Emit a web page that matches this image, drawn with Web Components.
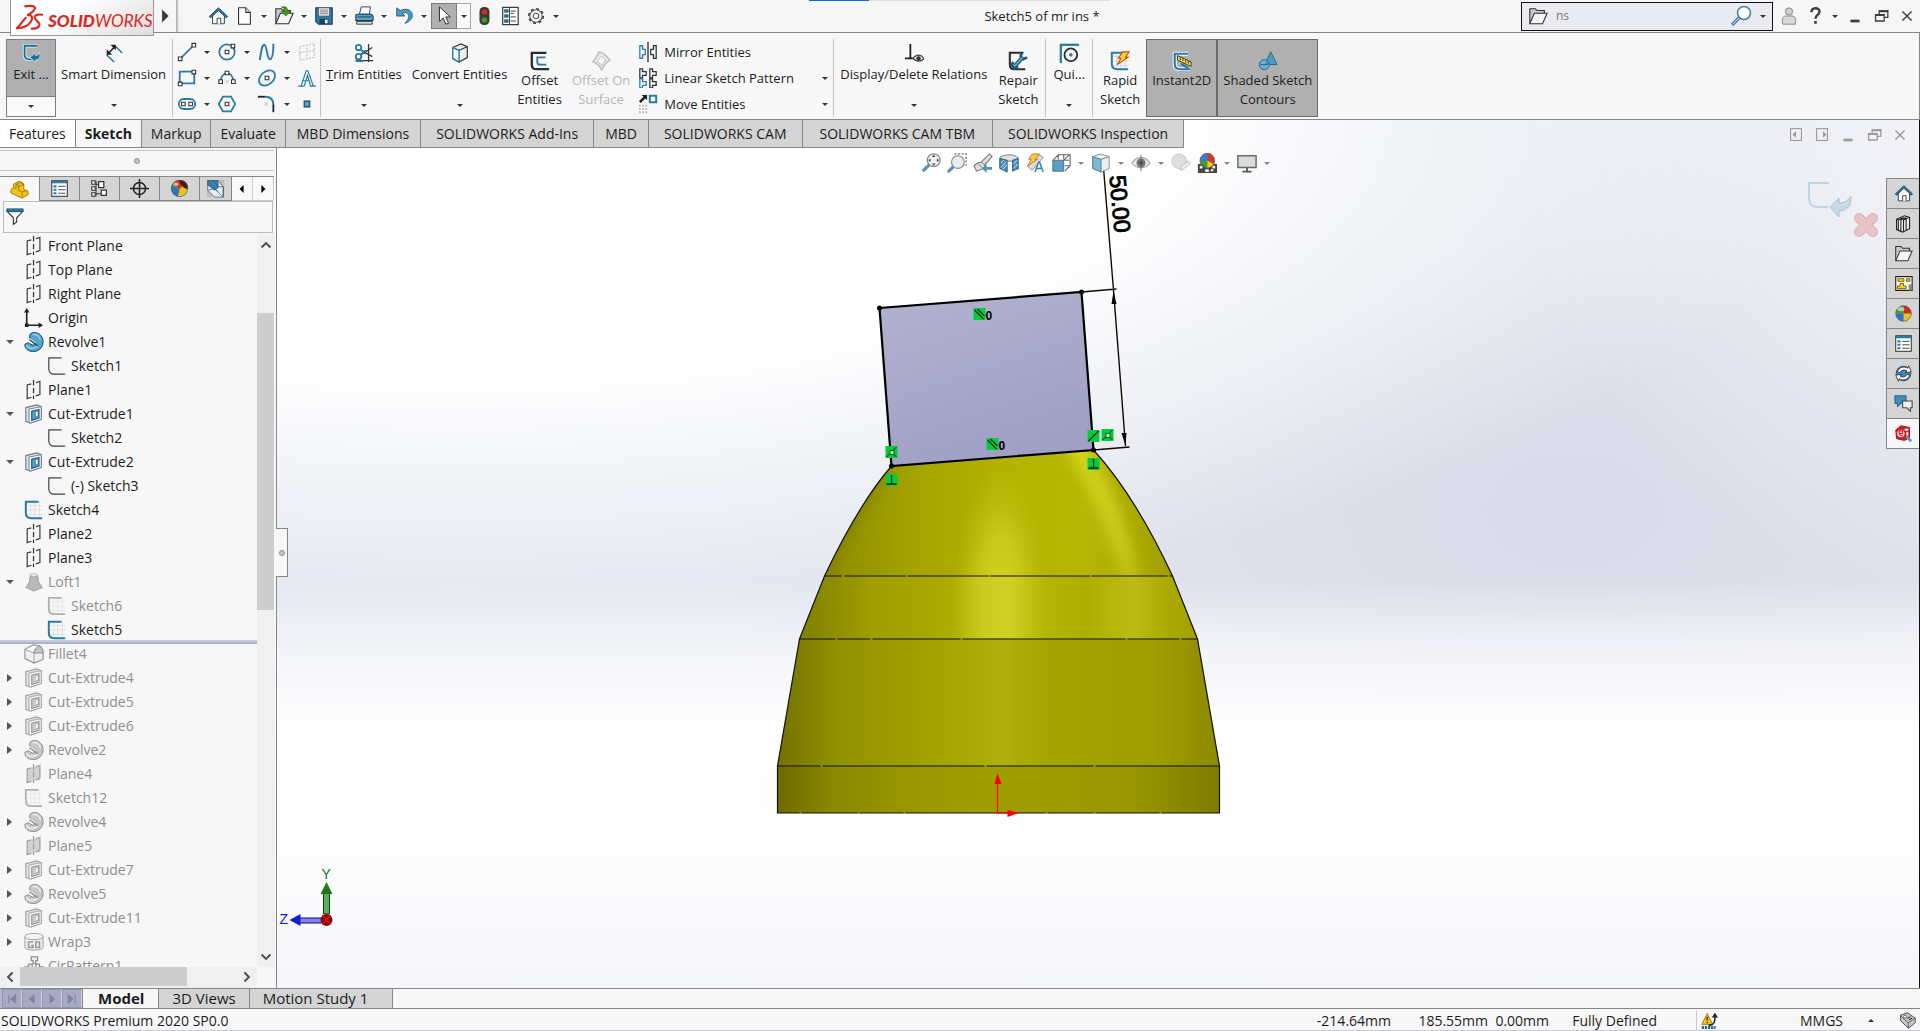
<!DOCTYPE html>
<html lang="en">
<head>
<meta charset="utf-8">
<title>Sketch5 of mr ins *</title>
<style>
html,body{height:100%;margin:0}
body{font-family:"Open Sans","Noto Sans",sans-serif;font-size:14px;color:#1c1c1c;background:#f7f7f7;overflow:hidden;
--panel:#f7f7f7;--line:#868686;--tab:#d4d4d4;--on:#b0b0b0;--small:13px}
</style>
</head>
<body>
<sw-app></sw-app>
<script>
const B='#2b7ba3', D='#333', G='#9a9a9a';
const planeIcon=(c,f='none')=>`<path d="M3.500 5.500L17.500 1.500V16L3.500 20.500z" fill="${f}"/><path d="M8 4.300L3.500 5.500V20.500L8 19M13 3L17.500 1.500V16L13 17.500" fill="none" stroke="${c}" stroke-width="1.300"/><path d="M10.500 0v21" stroke="${c}" stroke-width="1.400" stroke-dasharray="6 2.500" fill="none"/>`;
const cutIcon=(c,a,b)=>`<path d="M2 4L14 1l5 2v14L7 21l-5-2z" fill="#e2e2e2" stroke="${c}" stroke-width="1.200"/><path d="M5.500 5.500L19 3v14L7 21l-1.500-1z" fill="#f4f4f4" stroke="${c}"/><path d="M8.500 8l8-2v9.500l-8 2.500z" fill="${a}" stroke="${b}" stroke-width="1.300"/><path d="M12.500 8.500l3-.8v5.500l-3 1z" fill="#fff" stroke="${b}" stroke-width=".7"/>`;
const revIcon=(f,c,h)=>`<path d="M7 2C13-2 21 3 21 10.500S15 22 9.500 21.500C4 21 .5 18 1 13.500c2-2 5-2 6.500 0C9 15 13 14.500 13.500 12.500L8 8.500C6 7 5.500 4 7 2z" fill="${f}" stroke="${c}" stroke-width="1.100"/><path d="M2.500 14.500c2 4 9 5 12.500 1M9.500 3c5-1 8 2 8.500 6" fill="none" stroke="${h}" stroke-width="1.700"/><path d="M6 8.500l9 6.500" stroke="${c}" stroke-width="1.600"/><path d="M6.500 7.500l7 4.500" stroke="#fff" stroke-width="1"/>`;
const ball=`<circle cx="11" cy="11" r="9" fill="#e8c51d"/><path d="M11 11V2a9 9 0 0 1 9 9z" fill="#cf2a2a"/><path d="M11 11H2a9 9 0 0 1 9-9z" fill="#3c9a38"/><path d="M11 11v9a9 9 0 0 1-9-9z" fill="#2f6fd0"/><circle cx="11" cy="11" r="9" fill="none" stroke="#555" stroke-width=".8"/><ellipse cx="8" cy="6" rx="4" ry="2.500" fill="#fff" opacity=".55"/>`;
const homeIcon=`<path d="M5 10v9.500h13V10L11.500 4z" fill="#fff" stroke="${D}"/><path d="M1.500 11.500l10-9.500 10 9.500-1.500 1.500-8.500-8-8.500 8z" fill="${B}" stroke="#17445c"/><path d="M10 19.500v-6h4v6" fill="#fff" stroke="${D}"/>`;
const folder=`<path d="M2 19V3h6l2 2h8v3" fill="#c9c9c9" stroke="${D}" stroke-width="1.200"/><path d="M2 19.500L7 8h14l-5 11.500z" fill="#f4f4f4" stroke="${D}" stroke-width="1.200"/>`;
const listIcon=`<rect x="2" y="2" width="18" height="18" fill="#fff" stroke="${D}" stroke-width="1.200"/><path d="M2 3.500h18" stroke="${B}" stroke-width="3"/><path d="M4 8.500h3.500M4 12.500h3.500M4 16.500h3.500" stroke="${B}" stroke-width="2.400"/><path d="M9.500 8.500H18M9.500 12.500H18M9.500 16.500H18" stroke="${D}"/>`;
const sketchIcon=(c,w,g)=>`${g?`<path d="M7 2v17M12 2v17M17 2v17M3 6h17M3 11h17M3 16h17" stroke="${g}" fill="none"/>`:''}<path d="M16 2H2v12q0 6 6 6h12" fill="none" stroke="${c}" stroke-width="${w}"/>`;
const win={
min:c=>`<path d="M6 15h10v3H6z" fill="${c}"/>`,
rest:c=>`<path d="M9 9V5.500h9.500v7H15M5 9.500h9.500v7H5z" fill="none" stroke="${c}" stroke-width="1.400"/><path d="M9 5.800h10M4.500 10h10" stroke="${c}" stroke-width="2"/>`,
close:c=>`<path d="M6 6l10 10M16 6L6 16" stroke="${c}" stroke-width="1.600"/>`};
const ICONS={
home:homeIcon,folder,list:listIcon,ball,
newdoc:`<path d="M5 2h8l5 5v13H5z" fill="#fff" stroke="${D}" stroke-width="1.200"/><path d="M13 2v5h5" fill="#ddd" stroke="${D}" stroke-width="1.200"/>`,
open:folder+`<path d="M10 1c4-1 5 2 5 5h3l-5 5-5-5h3c0-3 0-4-3-5z" fill="#3f9a1c" stroke="#286b10" stroke-width=".7"/>`,
save:`<path d="M2 2h18v18H5l-3-3z" fill="${B}" stroke="#17445c" stroke-width="1.300"/><path d="M5 2h12v9H5z" fill="#eee" stroke="#555" stroke-width=".8"/><path d="M6.500 4.500h9M6.500 6.500h9M6.500 8.500h9" stroke="#777"/><path d="M6 14h10v6H6z" fill="#17445c"/><path d="M12 15h3v4h-3z" fill="#eee"/>`,
print:`<path d="M6 9l2-8h10l-1 8z" fill="#fff" stroke="${D}"/><path d="M3 9h16l2 2v5H2v-6z" fill="#5aa0c4" stroke="#17445c" stroke-width="1.200"/><path d="M3 17h17v3H3z" fill="#ddd" stroke="${D}"/><path d="M4 12h15" stroke="#17445c"/>`,
undo:`<path d="M3 2v9h9L9 8c5-2 8 1 7 5-.5 2-2 4-4 6 6-2 9-6 8-10C19 4 13 2 7 5z" fill="#4b9ac2" stroke="#1f5f82"/>`,
cursor:`<path d="M6 1v16l4-4 3 7 3-1-3-7h5z" fill="#fff" stroke="${D}" stroke-width="1.100"/>`,
traffic:`<rect x="6" y="1" width="11" height="20" rx="5" fill="#3a3a3a"/><circle cx="11.500" cy="6.500" r="3" fill="#d92b1c"/><circle cx="11.500" cy="15.500" r="3" fill="#3f9c2a"/>`,
options:`<rect x="3" y="1.500" width="17" height="19" fill="#fff" stroke="${D}" stroke-width="1.300"/><path d="M10.500 2v18M11.500 5.500h6M11.500 8h4M11.500 12h6M11.500 16.500h6" stroke="${D}"/><path d="M5 4h4v3H5zM5 9.500h4v3H5zM5 15h4v3H5z" fill="${B}" stroke="#17445c" stroke-width=".7"/>`,
gear:`<circle cx="11" cy="11" r="7.800" fill="none" stroke="#444" stroke-width="2.200" stroke-dasharray="3.100 3.020"/><circle cx="11" cy="11" r="6.800" fill="#f7f7f7" stroke="#555" stroke-width="1.200"/><circle cx="11" cy="11" r="3" fill="none" stroke="#555" stroke-width="1.200"/>`,
play:`<path d="M7 2l9 9-9 9z" fill="#3c3c3c"/>`,
search:`<circle cx="14" cy="8" r="6.500" fill="#fff" stroke="#4682a6" stroke-width="1.600"/><path d="M9.500 12.500L2 20" stroke="#4682a6" stroke-width="3.200"/><path d="M9 13l-6.500 6.500" stroke="#cfe2ec"/>`,
person:`<circle cx="11" cy="6" r="4" fill="#cfcfcf" stroke="#858585"/><path d="M4 20c-1-6 0-9 4-9h6c4 0 5 3 4 9z" fill="#d6d6d6" stroke="#858585"/>`,
help:`<path d="M7 7c0-6 9-6 9-1 0 4-4.500 3.500-4.500 8" fill="none" stroke="#3e3e3e" stroke-width="2.700"/><path d="M10 16.500h3v3h-3z" fill="#3e3e3e"/>`,
min:win.min('#3c3c3c'),restore:win.rest('#3c3c3c'),close:win.close('#3c3c3c'),
gmin:win.min(G),grestore:win.rest(G),gclose:win.close(G),
dockl:`<rect x="5" y="4" width="12" height="13" fill="none" stroke="${G}" stroke-width="1.200"/><path d="M11 7v7l-4-3.500z" fill="${G}"/>`,
dockr:`<rect x="5" y="4" width="12" height="13" fill="none" stroke="${G}" stroke-width="1.200"/><path d="M12 7v7l4-3.500z" fill="${G}"/>`,
exit:`<path d="M18 3H4v10q0 5 5 5h2" fill="none" stroke="#d9eef8" stroke-width="4"/><path d="M18 3H4v10q0 5 5 5h2" fill="none" stroke="#1e6f98" stroke-width="2"/><path d="M10 16l6-5v3c3 0 4-2 4-4 2 6 0 8-4 8.500V21z" fill="#1e6f98" stroke="#d9eef8" stroke-width=".6"/>`,
smart:`<path d="M12 3l8 8M3 13l8 8M12 3l-2 2M3 13l2-2" stroke="#1e6f98" stroke-width="1.500" fill="none"/><path d="M4 12l8-8" stroke="#222" stroke-width="1.600"/><path d="M13 2v6L7 2zM3 13V7l6 6z" fill="#222"/>`,
line:`<path d="M4 18L18 4" stroke="${B}" stroke-width="1.900"/><path d="M1.500 16.500h4v4h-4zM16.500 1.500h4v4h-4z" fill="#fff" stroke="${D}" stroke-width="1.200"/>`,
circle:`<circle cx="11" cy="11" r="8.500" fill="none" stroke="${B}" stroke-width="1.900"/><path d="M9 9h4v4H9zM15.500 2.500h4v4h-4z" fill="#fff" stroke="${D}" stroke-width="1.200"/>`,
spline:`<path d="M3 20C5 10 5 3 8 3s3 16 6 16S18 10 18 2" fill="none" stroke="${B}" stroke-width="2.100"/>`,
planedis:`<path d="M3 5l16-3v15L3 20zM3 12l16-3M11 3v16" fill="none" stroke="#bdbdbd" stroke-width="1.300" stroke-dasharray="2 1.500"/>`,
rect:`<path d="M3 4h16v13H3z" fill="none" stroke="${B}" stroke-width="2"/><path d="M1.500 15.500h4v4h-4zM16.500 2.500h4v4h-4z" fill="#fff" stroke="${D}" stroke-width="1.200"/>`,
arc:`<path d="M4 15c0-12 14-12 14 0" fill="none" stroke="${B}" stroke-width="1.900"/><path d="M2 13h4v4H2zM16 13h4v4h-4zM9 3.500h4v4H9z" fill="#fff" stroke="${D}" stroke-width="1.200"/><path d="M9 13l4 4M13 13l-4 4" stroke="#bbb"/>`,
ellipse:`<ellipse cx="11" cy="11" rx="10" ry="7" transform="rotate(-40 11 11)" fill="none" stroke="${B}" stroke-width="1.900"/><path d="M9 9h4v4H9z" fill="#fff" stroke="${D}" stroke-width="1.200"/>`,
letter:`<path d="M1.500 20h6M14 20h7M4.500 20L10 3h2l6 17M7 14h7M8 20l3.500-12 3.500 12" fill="none" stroke="${B}" stroke-width="1.300"/>`,
slot:`<rect x="2" y="5.500" width="18" height="11" rx="5.500" fill="none" stroke="${B}" stroke-width="2"/><path d="M5 9h4v4H5zM13 9h4v4h-4z" fill="#fff" stroke="${D}" stroke-width="1.200"/>`,
hex:`<path d="M6.500 3h9l4.500 8-4.500 8h-9L2 11z" fill="none" stroke="${B}" stroke-width="1.900"/><path d="M9 9h4v4H9z" fill="#fff" stroke="${D}" stroke-width="1.200"/>`,
fillet:`<path d="M1 3h8" stroke="#222" stroke-width="2"/><path d="M9 3q9 0 9 9" fill="none" stroke="${B}" stroke-width="2.200"/><path d="M18 12v8" stroke="#222" stroke-width="2"/><path d="M8 9l4 4M12 9l-4 4" stroke="#bbb"/>`,
point:`<path d="M8 8h6v6H8z" fill="#56a5cc" stroke="#1b536f" stroke-width="1.500"/>`,
trim:`<path d="M2 19.500h19M16 1v20M8 8l12 7M8 13L20 5" stroke="${D}" stroke-width="1.400"/><circle cx="5" cy="5" r="3" fill="none" stroke="${B}" stroke-width="2"/><circle cx="5" cy="15" r="3" fill="none" stroke="${B}" stroke-width="2"/><path d="M7 7l6 5M7 13l6-5M2 20h8" stroke="${B}" stroke-width="2"/>`,
convert:`<path d="M3 5l9-4 7 3v12l-9 5-7-4z" fill="#ededed" stroke="${D}" stroke-width="1.300"/><path d="M3 5l7 3v13l-7-4z" fill="#f9fcff" stroke="${B}" stroke-width="1.600"/><path d="M10 8l9-4" stroke="${D}" stroke-width="1.200"/>`,
offset:`<path d="M18 2H2v13q0 5 5 5h14" fill="none" stroke="#2d2d2d" stroke-width="2.600"/><path d="M17 7H8v5q0 3 3 3h7" fill="none" stroke="${B}" stroke-width="2"/>`,
offsurf:`<path d="M2 12C5 8 7 5 9 1c5 1 8 4 12 9-4 2-7 6-9 11C10 17 6 13 2 12z" fill="#e6e6e6" stroke="#b9b9b9" stroke-width="1.400"/><path d="M7 11l4-5c2 1 3 2 5 4l-4 6z" fill="#f7f7f7" stroke="#bbb"/>`,
mirror:`<path d="M11 0v22" stroke="#222" stroke-width="1.400"/><path d="M2 4h3v4h3v6H5v4H2z" fill="none" stroke="${B}" stroke-width="1.400"/><path d="M20 4h-3v4h-3v6h3v4h3z" fill="none" stroke="${D}" stroke-width="1.400"/>`,
linear:`<path d="M2 1h3v3h4v4H5v3H2zM13 1h3v3h4v4h-4v3h-3zM13 12h3v3h4v4h-4v3h-3z" fill="none" stroke="${D}" stroke-width="1.400"/><path d="M2 12h3v3h4v4H5v3H2z" fill="none" stroke="${B}" stroke-width="1.400"/>`,
move:`<path d="M4 1h6v6L8 5l-5 5-2-2 5-5z" fill="#222"/><path d="M13 2h7v7h-7z" fill="none" stroke="${B}" stroke-width="2.200"/><path d="M1 13h9M1 16.500h9M1 20h9" stroke="#bbb" stroke-width="2.200" stroke-dasharray="2 1.500"/>`,
relations:`<path d="M7 1v15M1 17h10" stroke="#222" stroke-width="2"/><path d="M10 17c3-5 9-5 12 0-3 4-9 4-12 0z" fill="#eee" stroke="#444" stroke-width="1.300"/><circle cx="16" cy="17" r="2.500" fill="#333"/>`,
repair:`<path d="M17 2H2v13q0 5 5 5h12" fill="none" stroke="#2d2d2d" stroke-width="2.300"/><path d="M8 16l8-9" stroke="#1d5877" stroke-width="4.500"/><path d="M15 2l-1 4 3 3 4-2M6 12l-2 3 3 4 4-2" fill="none" stroke="#1d5877" stroke-width="3"/><path d="M8 16l8-9" stroke="#5aa7cc" stroke-width="2"/>`,
quick:`<path d="M1 2h21" stroke="${B}" stroke-width="2.500"/><path d="M2 2v20" stroke="${B}" stroke-width="2.500"/><circle cx="13" cy="13" r="7" fill="none" stroke="#2d2d2d" stroke-width="2"/><circle cx="13" cy="13" r="2" fill="${B}"/>`,
rapid:sketchIcon(B,2.2,'#d5d5d5')+`<path d="M14 1h7l-4 6h3L8 15l4-7H9z" fill="#ffd02e" stroke="#b3541b" stroke-width="1.200"/>`,
instant:`<path d="M18 3H3v11q0 6 6 6h11" fill="none" stroke="#eef8fd" stroke-width="4.500"/><path d="M18 3H3v11q0 6 6 6h11" fill="none" stroke="${B}" stroke-width="2.300"/><path d="M6 5l15 7v5L6 10z" fill="#ffd83a" stroke="#333"/><path d="M9 7v3M12 8v3M15 10v3M18 11v3" stroke="#333"/><path d="M10 14l8 5" stroke="${B}" stroke-width="2.400"/>`,
shaded:`<path d="M14 1l7 14H7z" fill="#4a9cc6" stroke="#245e7d"/><circle cx="7" cy="15" r="5.500" fill="#5fb0d8" fill-opacity=".85" stroke="#245e7d"/><path d="M3 15h8M9 13l3 1" stroke="#245e7d"/>`,
part:`<path d="M1 11l3-2V5l5-3h4l3 3v6l5 2v4l-7 4L1 15z" fill="#f3c21b" stroke="#9c7408"/><path d="M4 9l3 1V5l3 1v6l4 2v6M7 5l5-2 4 2-6 3M14 14l6-2" fill="none" stroke="#9c7408"/>`,
config:`<path d="M7 2v18M7 6h5M7 17h6" fill="none" stroke="${D}" stroke-width="1.200"/><path d="M2 2h4v4H2zM2 9h4v4H2zM2 16h4v4H2z" fill="#eee" stroke="${D}" stroke-width="1.200"/><path d="M10 3h6v7h-6zM13 13h6v6h-6z" fill="#fff" stroke="${D}" stroke-width="1.400"/>`,
target:`<circle cx="11" cy="11" r="7" fill="none" stroke="#222" stroke-width="1.800"/><path d="M11 0v22M0 11h22" stroke="#222" stroke-width="1.800"/>`,
display:`<circle cx="11" cy="11" r="9.500" fill="#e8c51d"/><path d="M11 12L3 6C6 0 14 0 18 4z" fill="#d8342a"/><path d="M11 12L1.600 10C2 7 3 5 4 5z" fill="#3c9a38"/><path d="M11 12l-2 8.500C4 19 1 15 1.600 9z" fill="#2f6fd0"/><path d="M11 2c7-1 10 5 9 9-3 0-8-4-9-9z" fill="#501414" stroke="#222"/><circle cx="11" cy="11" r="9.500" fill="none" stroke="#555" stroke-width=".8"/><ellipse cx="7" cy="6" rx="3" ry="2" fill="#fff" opacity=".6"/>`,
cam:`<path d="M1 1h20v20H1z" fill="#bdbdbd"/><path d="M2 2h12l6 7v12H10l-8-8z" fill="#e4eef3" stroke="#555" stroke-width=".8"/><path d="M2 2h12v8l-4 3-8-6z" fill="#3c89b3" stroke="#1c4f6d" stroke-width=".8"/><path d="M2 2l12 13M8 2l6 7M14 9h6v12M2 13l8-2 10 10" fill="none" stroke="#1c4f6d" stroke-width=".8"/>`,
filter:`<path d="M1.500 4L9 12v8l4-3v-5l7.500-8z" fill="#fafafa" stroke="${D}" stroke-width="1.300"/><path d="M1 1h20v3.500H1z" fill="${B}" stroke="#17445c" stroke-width=".8"/>`,
plane:planeIcon('#3a3a3a'),gplane:planeIcon('#9d9d9d','#d2d2d2'),
origin:`<path d="M3 4v15h14" fill="none" stroke="#222" stroke-width="1.800"/><path d="M0 5l3-5 3 5zM16 16l5 3-5 3zM1 17h4v4H1z" fill="#222"/>`,
revolve:revIcon('#4fa3cd','#1d4a60','#8fd0ee'),grevolve:revIcon('#c6c6c6','#8f8f8f','#ececec'),
sketch:sketchIcon('#444',1.300),gsketch:sketchIcon('#b0b0b0',2,'#e9e9e9'),bsketch:sketchIcon(B,2.2,'#dedede'),
cut:cutIcon('#777','#4fa3cd','#1c6084'),gcut:cutIcon('#a0a0a0','#ccc','#999'),
loft:`<path d="M7 3c0-2 8-2 8 0l1 8 4 6-9 4-9-4 4-6z" fill="#b9b9b9" stroke="#9a9a9a"/><ellipse cx="11" cy="3" rx="4" ry="1.500" fill="#e4e4e4"/>`,
gfillet:`<path d="M1 6l9-5 7 1c3 2 4 5 4 8v7l-10 4-10-5z" fill="#efefef" stroke="#8f8f8f" stroke-width="1.200"/><path d="M1 6l10 4c0-4 3-6 6-8l-7-1z" fill="#fafafa" stroke="#9a9a9a"/><path d="M11 10c0-4 3-6 6-8 3 2 4 4 4 8z" fill="#c4c4c4" stroke="#8f8f8f"/><path d="M11 10v11" stroke="#9a9a9a"/>`,
wrap:`<path d="M1 5v12c0 4 20 4 20 0V5" fill="#ededed" stroke="#999"/><ellipse cx="11" cy="5" rx="10" ry="3.500" fill="#f4f4f4" stroke="#999"/><path d="M10 11H5v6h5v-2H8M13 11h4v6h-4z" fill="none" stroke="#999" stroke-width="1.700"/>`,
pattern:`<path d="M8 1h7v4h-2v3h-3V5H8zM1 12h4v-3h4v7H1zM21 12h-4v-3h-4v7h8z" fill="#eee" stroke="#909090" stroke-width="1.400"/>`,
zoomfit:`<circle cx="14" cy="8" r="7" fill="#f2f2f2" stroke="#8a8a8a" stroke-width="1.400"/><path d="M9 13l-7 7" stroke="#5692b4" stroke-width="3.400"/><path d="M14 2l2 2.500h-4zM14 14l2-2.500h-4zM8 8l2.500-2v4zM20 8l-2.500-2v4z" fill="#444"/>`,
zoomarea:`<path d="M8 1h13v13" fill="none" stroke="#777" stroke-dasharray="2.500 1.500" stroke-width="1.400"/><circle cx="12" cy="10" r="7" fill="#e7eef1" stroke="#8a8a8a" stroke-width="1.300"/><path d="M7 15l-6 6" stroke="#5692b4" stroke-width="3.400"/>`,
prev:`<path d="M1 14l4-3 4-1 9-9 3 3-8 9-1 4-8 3z" fill="#dcdcdc" stroke="#777" stroke-width="1.200"/><path d="M9 10l4 3M5 11l6 6" stroke="#777"/><path d="M10 17l5-5v3.500h6v3h-6V22z" fill="#4e93b9"/>`,
section:`<path d="M1 5c5-4 15-4 20 0v13l-5-2V9h-9v10l-6-2z" fill="#e2e2e2" stroke="#777"/><path d="M1 6l8 2v13l-8-4zM15 8l6-2v11l-6 3z" fill="#4e93b9" stroke="#245a78"/><path d="M2 11l3-3M2 16l6-6M4 18l5-5M16 12l4-4M16 17l5-5" stroke="#d5e9f3"/>`,
dyn:`<path d="M3 15L16 2l4 3L8 19z" fill="#ddd" stroke="#858585"/><path d="M8 1h8l-5 6h3L3 14l4-7H4z" fill="#ffc74a" stroke="#c0762c"/><path d="M11 21l4-11h1l4 11M13 17h6" fill="none" stroke="#3a83aa" stroke-width="1.700"/>`,
orient:`<path d="M2 8h12v12H2z" fill="#5a9fc4" stroke="#4a6a7a"/><path d="M2 8l6-6h13v12l-6 6M14 8l6-6M14 1v6M8 2v5M15 8h5M15 14h5" fill="none" stroke="#666" stroke-width="1.200"/>`,
style:`<path d="M2 4l8-3 10 3v13l-9 4-9-4z" fill="#e8eef1" stroke="#888"/><path d="M2 4l9 3v14l-9-4z" fill="#7bb8d6" stroke="#50798c"/><path d="M11 7l9-3" stroke="#777"/>`,
eye:`<path d="M1 11c5-8 15-8 20 0-5 7-15 7-20 0z" fill="#e9e9e9" stroke="#a5a5a5" stroke-width="1.300"/><circle cx="11" cy="11" r="5" fill="#777"/><circle cx="11" cy="11" r="2" fill="#333"/><path d="M11 2v18" stroke="#666"/>`,
appear:`<circle cx="9" cy="9" r="8" fill="#dedede" stroke="#c6c6c6"/><path d="M10 19l1-4 8-6 2 3-8 6z" fill="#eee" stroke="#bbb"/>`,
scene:`<path d="M1 12h21v10H1z" fill="#444"/><path d="M3 14h3v3H3zM9 18h4v3H9zM17 14h3v3h-3zM4 19h3M15 18h3v2h-3z" fill="#eee"/><g transform="translate(2 -1) scale(.85)"><circle cx="11" cy="11" r="9.500" fill="#3c9a38"/><path d="M11 11V1.500a9.500 9.500 0 0 1 8 14z" fill="#d8342a"/><path d="M11 11H1.500a9.500 9.500 0 0 1 9.500-9.500z" fill="#3b7ad8"/><path d="M11 11v9.500a9.500 9.500 0 0 0 8-5z" fill="#eec81f"/><circle cx="11" cy="11" r="9.500" fill="none" stroke="#666"/></g>`,
monitor:`<path d="M1 3h20v13H1z" fill="#d8dcdc" stroke="#6a6a6a" stroke-width="1.600"/><path d="M11 16v4M6 20.500h10" stroke="#555" stroke-width="2"/>`,
library:`<path d="M3 6l9-4 6 2v13l-8 4-7-3z" fill="#f6f6f6" stroke="#222" stroke-width="1.300"/><path d="M3 6l2 1v12M5 7l6-3M8 6v14M8 7l6-3M11 7v13M11 7l6-3M14 6v13" fill="none" stroke="#222" stroke-width="1.300"/>`,
palette:`<path d="M2 3h19v16H2z" fill="#fff" stroke="#222" stroke-width="1.300"/><path d="M4.500 5.500h7v3h-7zM14.500 5.500h4v3h-4zM7 11h4v3h3v3H4v-3h3z" fill="#ffd324" stroke="#6b5300"/><path d="M17 12h4v7h-4z" fill="#888"/>`,
globe:`<circle cx="11" cy="11" r="8.500" fill="#3f87c8" stroke="#205080"/><path d="M4 9c1-5 8-7 12-4l1-3 3 7-7 1 2-2c-3-2-7-1-8 2zM18 13c-1 5-8 7-12 4l-1 3-3-7 7-1-2 2c3 2 7 1 8-2z" fill="#fff" stroke="#333"/>`,
forum:`<path d="M1 2h13v9H8l-4 4v-4H1z" fill="#3d8db5" stroke="#22597a"/><path d="M10 8h11v8h-2v4l-4-4h-5z" fill="#f0f0f0" stroke="#444" stroke-width="1.200"/>`,
inspect:`<path d="M2 7l6-5 10 2v12l-6 3-9-2z" fill="#cc1f28" stroke="#8a1018"/><circle cx="8" cy="11" r="5" fill="#f8d8da" stroke="#cc1f28" stroke-width="1.500"/><path d="M6 8h4v3H6zM6 12l4 2" stroke="#cc1f28" stroke-width="1.300" fill="none"/><path d="M12 5h5v3h-5zM14 9h3v5h-3z" fill="#fff" stroke="#a1141c" stroke-width=".7"/><path d="M14 14l6 6" stroke="#5b9ac0" stroke-width="3"/>`,
warn:`<path d="M1 16L8 2l7 14z" fill="#ffc420" stroke="#8a5a00"/><path d="M8 6v5M8 12.500v2" stroke="#222" stroke-width="1.600"/><path d="M10 16c6 0 7-3 7-9h-3l4-6 4 6h-3c0 8-3 11-9 11z" fill="#222"/><path d="M1 20h18" stroke="#2b6d92" stroke-width="4" stroke-dasharray="3 1"/>`,
tag:`<path d="M2 4l9-3 10 7v6l-9 7L2 11z" fill="#c9c9c9" stroke="#444" stroke-width="1.200"/><path d="M2 5l10 9 9-6M12 14v7" fill="none" stroke="#444"/><circle cx="8" cy="6" r="2" fill="#fff" stroke="#444"/><path d="M11 8l4-2M13 10l4-2" stroke="#333" stroke-width="1.300"/>`,
first:`<path d="M6 4v14M17 4l-8 7 8 7z" fill="#8283a2" stroke="#8283a2" stroke-width="1.500"/>`,
left:`<path d="M15 3l-9 8 9 8z" fill="#8283a2"/>`,right:`<path d="M7 3l9 8-9 8z" fill="#8283a2"/>`,
last:`<path d="M16 4v14M5 4l8 7-8 7z" fill="#8283a2" stroke="#8283a2" stroke-width="1.500"/>`,
tl:`<path d="M13 6v10l-5-5z" fill="#000"/>`,tr:`<path d="M9 6v10l5-5z" fill="#000"/>`,
up:`<path d="M4 15l7-7 7 7" fill="none" stroke="#505050" stroke-width="3.200"/>`,down:`<path d="M4 7l7 7 7-7" fill="none" stroke="#505050" stroke-width="3.200"/>`,
cl:`<path d="M15 4l-7 7 7 7" fill="none" stroke="#505050" stroke-width="3.200"/>`,cr:`<path d="M7 4l7 7-7 7" fill="none" stroke="#505050" stroke-width="3.200"/>`,
ds:`<g fill="none" stroke="#d9291c" stroke-width="2.300"><path d="M9 1.500C20 0 23 2 18 7c-2 2-4 3-6 4 7-1 7 5 0 11-3 2-7 3-11 3l10-12"/><path d="M29 10.500c-7-1-11 1-8 5s6 4 3 8c-2 2-5 2-8 2"/></g>`
};
const VB={ds:'0 0 30 28'};
const BASE=`:host{box-sizing:border-box}*,*::before,*::after{box-sizing:border-box}
button,input{font:inherit;color:inherit;margin:0;padding:0;border:0;background:none;border-radius:0}
button{display:flex;align-items:center;justify-content:center;line-height:inherit;white-space:nowrap}`;
function define(name,css,html){
  customElements.define(name,class extends HTMLElement{
    connectedCallback(){
      if(this.shadowRoot)return;
      const r=this.attachShadow({mode:'open'});
      r.innerHTML=`<style>${BASE}${css}</style>${typeof html==='function'?html(this):html}`;
    }
  });
}
define('sw-icon',`:host{display:inline-flex;flex:none;width:var(--size,20px);height:var(--size,20px)}svg{width:100%;height:100%;display:block}`,
  el=>{const n=el.getAttribute('name');return `<svg viewBox="${VB[n]||'0 0 22 22'}" aria-hidden="true">${ICONS[n]||''}</svg>`});
define('sw-caret',`:host{display:inline-block;flex:none;width:0;height:0;border:3px solid transparent;border-bottom:0;border-top-color:var(--caret,#333)}
:host([up]){border:3px solid transparent;border-top:0;border-bottom-color:#333}`,'');

/* A square tool with an optional drop-down arrow. */
define('sw-tool',`:host{display:flex;height:26px;align-items:stretch}
.main{width:26px}.menu{width:14px}
:host([pressed]) .main{background:var(--on);border:1px solid #7d7d7d}
:host([pressed]) .menu{background:#fafafa;border:1px solid #a8a8a8;border-left:0}`,
  el=>`<button class="main" aria-label="${el.getAttribute('label')}"><sw-icon name="${el.getAttribute('icon')}"></sw-icon></button>${el.hasAttribute('menu')?`<button class="menu" aria-label="${el.getAttribute('label')} options"><sw-caret></sw-caret></button>`:''}`);

define('sw-titlebar',`:host{display:flex;align-items:center;height:33px;border-bottom:1px solid var(--line);background:linear-gradient(var(--panel),#f5f5f5)}
.brand{align-self:flex-start;display:flex;align-items:center;gap:4px;width:144px;height:36px;margin-left:10px;padding-left:5px;border:1px solid #999;border-top:0;position:relative;z-index:2;background:linear-gradient(150deg,#fff 35%,#ddd);color:#d9291c;font:italic 900 17px/20px Lato,"Open Sans",sans-serif}
.brand span{padding-top:6px}
.brand sw-icon{--size:28px}.brand i{font-weight:400}
.more{width:22px;height:32px}
.quick{display:flex;margin-left:26px}
h1{flex:1;margin:0;text-align:center;font-size:var(--small);font-weight:400;line-height:20px}
.search{display:flex;align-items:center;width:252px;height:29px;border:1px solid #111;background:#eaebf0;padding:0 6px;gap:8px;margin-right:3px}
.search input{flex:1;min-width:0;font-size:12px;line-height:18px;color:#777;outline:0}
.search .go{--size:22px}
.win{display:flex}
.sep{width:3px;align-self:stretch;background:linear-gradient(90deg,#aaa,#eee)}
`,`<div class="brand"><sw-icon name="ds"></sw-icon><span>SOLID<i>WORKS</i></span></div>
<button class="more" aria-label="Show menus"><sw-icon name="play" style="--size:16px"></sw-icon></button><span class="sep"></span>
<div class="quick"><sw-tool icon="home" label="Home"></sw-tool><sw-tool icon="newdoc" label="New" menu></sw-tool><sw-tool icon="open" label="Open" menu></sw-tool><sw-tool icon="save" label="Save" menu></sw-tool><sw-tool icon="print" label="Print" menu></sw-tool><sw-tool icon="undo" label="Undo" menu></sw-tool><sw-tool icon="cursor" label="Select" menu pressed></sw-tool><sw-tool icon="traffic" label="Rebuild"></sw-tool><sw-tool icon="options" label="File properties"></sw-tool><sw-tool icon="gear" label="Options" menu></sw-tool></div>
<h1>Sketch5 of mr ins *</h1>
<label class="search"><sw-icon name="folder"></sw-icon><input value="ns" aria-label="Search"><sw-icon class="go" name="search"></sw-icon><sw-caret></sw-caret></label>
<div class="win"><sw-tool icon="person" label="Log in"></sw-tool><sw-tool icon="help" label="Help" menu></sw-tool><sw-tool icon="min" label="Minimize"></sw-tool><sw-tool icon="restore" label="Restore"></sw-tool><sw-tool icon="close" label="Close"></sw-tool></div>`);

/* Large ribbon command: icon above a one- or two-line label. */
define('sw-command',`:host{display:flex;height:78px}
button{flex:1;flex-direction:column;justify-content:flex-start;padding:4px 5px 0;font-size:var(--small);line-height:20px;text-align:center}
.label{white-space:pre-line;margin-top:1px}
:host([tall]) button{padding-top:12px}:host([tall]) .label{margin-top:0;line-height:19px}
:host([roomy]) button{padding-left:6px;padding-right:6px}
sw-caret{margin-top:20px}
:host([on]) button{background:var(--on);border:1px solid #6b6b6b;padding-top:11px}
:host([off]){color:#b5b5b5}`,
  el=>`<button ${el.hasAttribute('off')?'disabled':''}><sw-icon name="${el.getAttribute('icon')}"></sw-icon><span class="label"><slot></slot></span>${el.hasAttribute('menu')?'<sw-caret></sw-caret>':''}</button>`);
define('sw-line-command',`:host{display:flex;height:26px}.main{flex:1;justify-content:flex-start;gap:6px;font-size:var(--small);line-height:20px}.menu{width:14px}`,
  el=>`<button class="main"><sw-icon name="${el.getAttribute('icon')}"></sw-icon><slot></slot></button>${el.hasAttribute('menu')?'<button class="menu" aria-label="More"><sw-caret></sw-caret></button>':''}`);

define('sw-ribbon',`:host{display:flex;height:87px;padding:6px 6px 2px;border-bottom:1px solid var(--line);border-right:1px solid var(--line);background:var(--panel)}
.exit{display:flex;flex-direction:column;width:50px;border:1px solid #7d7d7d}
.exit .a{flex:1;flex-direction:column;justify-content:flex-start;padding-top:3px;background:var(--on);font-size:var(--small);line-height:20px;gap:1px}
.exit .b{height:20px;border-top:1px solid #7d7d7d;background:#fafafa}
hr{width:1px;height:78px;margin:0 1px;border:0;background:#c3c3c3}
.grid{display:grid;grid-template-columns:40px 40px 40px 26px;grid-template-rows:26px 26px 26px}
.grid+hr{margin:0}
.lines{width:197px;padding-left:3px}
`,`<div class="exit"><button class="a"><sw-icon name="exit"></sw-icon><span>Exit ...</span></button><button class="b" aria-label="Exit options"><sw-caret></sw-caret></button></div>
<sw-command icon="smart" menu>Smart Dimension</sw-command><hr>
<div class="grid"><sw-tool icon="line" label="Line" menu></sw-tool><sw-tool icon="circle" label="Circle" menu></sw-tool><sw-tool icon="spline" label="Spline" menu></sw-tool><sw-tool icon="planedis" label="Plane"></sw-tool>
<sw-tool icon="rect" label="Rectangle" menu></sw-tool><sw-tool icon="arc" label="Arc" menu></sw-tool><sw-tool icon="ellipse" label="Ellipse" menu></sw-tool><sw-tool icon="letter" label="Text"></sw-tool>
<sw-tool icon="slot" label="Slot" menu></sw-tool><sw-tool icon="hex" label="Polygon"></sw-tool><sw-tool icon="fillet" label="Fillet" menu></sw-tool><sw-tool icon="point" label="Point"></sw-tool></div><hr>
<sw-command icon="trim" menu><u>T</u>rim Entities</sw-command><sw-command icon="convert" menu>Convert Entities</sw-command><sw-command icon="offset" tall>Offset
Entities</sw-command><sw-command icon="offsurf" tall off>Offset On
Surface</sw-command>
<div class="lines"><sw-line-command icon="mirror">Mirror Entities</sw-line-command><sw-line-command icon="linear" menu>Linear Sketch Pattern</sw-line-command><sw-line-command icon="move" menu>Move Entities</sw-line-command></div><hr>
<sw-command icon="relations" menu>Display/Delete Relations</sw-command><sw-command icon="repair" tall roomy>Repair
Sketch</sw-command><hr><sw-command icon="quick" menu roomy>Qui...</sw-command><hr><sw-command icon="rapid" tall roomy>Rapid
Sketch</sw-command><sw-command icon="instant" tall on>Instant2D</sw-command><sw-command icon="shaded" tall on>Shaded Sketch
Contours</sw-command>`);

define('sw-tabs',`:host{display:flex;align-items:flex-start;justify-content:space-between;height:28px}
nav{display:flex;height:28px;border-bottom:1px solid var(--line)}
button{padding:0 9px;border-right:1px solid var(--line);background:var(--tab);line-height:20px}
.m{padding:0 11px}.w{padding:0 15px}.x{padding:0 17px}
.lit{background:#fff}.active{background:var(--panel);font-weight:700}
.doc{display:flex;padding:2px 6px 0 0}`,
`<nav><button class="lit">Features</button><button class="active">Sketch</button><button>Markup</button><button>Evaluate</button><button class="m">MBD Dimensions</button><button class="w">SOLIDWORKS Add-Ins</button><button class="m">MBD</button><button class="w">SOLIDWORKS CAM</button><button class="x">SOLIDWORKS CAM TBM</button><button class="w">SOLIDWORKS Inspection</button></nav>
<div class="doc"><sw-tool icon="dockl" label="Dock left"></sw-tool><sw-tool icon="dockr" label="Dock right"></sw-tool><sw-tool icon="gmin" label="Minimize document"></sw-tool><sw-tool icon="grestore" label="Restore document"></sw-tool><sw-tool icon="gclose" label="Close document"></sw-tool></div>`);

define('sw-tree-item',`:host{display:flex;align-items:center;height:24px;line-height:20px}
:host([child]){padding-left:23px}
.tw{width:24px;height:24px;padding-right:5px}
.tw sw-caret{--caret:#555;border-width:4px 4px 0}
:host([closed]) .tw sw-caret{border:4px solid transparent;border-left:5px solid #555;border-right:0}
sw-icon{margin-right:4px}
:host([dim]){color:#8e8e8e}
:host([rollback]){box-shadow:inset 0 -2px #c9c9e0,0 2px #b2b2c8}`,
  el=>`<button class="tw" aria-label="Expand">${el.hasAttribute('open')||el.hasAttribute('closed')?'<sw-caret></sw-caret>':''}</button><sw-icon name="${el.getAttribute('icon')}"></sw-icon><slot></slot>`);

const TREE=[['plane','Front Plane'],['plane','Top Plane'],['plane','Right Plane'],['origin','Origin'],['revolve','Revolve1','open'],['sketch','Sketch1','child'],['plane','Plane1'],['cut','Cut-Extrude1','open'],['sketch','Sketch2','child'],['cut','Cut-Extrude2','open'],['sketch','(-) Sketch3','child'],['bsketch','Sketch4'],['plane','Plane2'],['plane','Plane3'],['loft','Loft1','open dim'],['gsketch','Sketch6','child dim'],['bsketch','Sketch5','child rollback'],['gfillet','Fillet4','dim'],['gcut','Cut-Extrude4','closed dim'],['gcut','Cut-Extrude5','closed dim'],['gcut','Cut-Extrude6','closed dim'],['grevolve','Revolve2','closed dim'],['gplane','Plane4','dim'],['gsketch','Sketch12','dim'],['grevolve','Revolve4','closed dim'],['gplane','Plane5','dim'],['gcut','Cut-Extrude7','closed dim'],['grevolve','Revolve5','closed dim'],['gcut','Cut-Extrude11','closed dim'],['wrap','Wrap3','closed dim'],['pattern','CirPattern1','dim']];
define('sw-manager',`:host{display:flex;flex-direction:column;width:277px;background:var(--panel);border-right:1px solid var(--line);position:relative}
.grip{height:21px;margin:2px 2px 5px 0;border:1px solid #c4c4c4;border-width:1px 0;display:flex;align-items:center;justify-content:center}
.dot{width:6px;height:6px;border-radius:50%;background:#c6c6c6;border:1px solid #8f8f8f}
.tabs{display:flex;height:25px;margin-right:2px;border-top:1px solid var(--line)}
.tabs button{width:40px;background:var(--tab);border:1px solid var(--line);border-width:0 1px 1px 0}
.tabs button:first-child{background:var(--panel);border-bottom:0}
.tabs .clip{width:32px}.tabs .nav{width:22px;flex:1;background:#f9f9f9;border-color:#ccc}
.tabs .nav sw-icon{--size:18px}
.filter{flex:none;display:flex;align-items:center;height:32px;margin:0 3px;border:1px solid #bcbcbc;padding-left:2px}
.filter sw-icon{--size:18px}.filter input{flex:1;min-width:0;outline:0}
.body{flex:1;min-height:0;display:flex;padding-right:2px}
.tree{flex:1;min-width:0;overflow:hidden;padding-top:1px}
.v{width:17px;margin-top:1px;background:#f0f0f0;display:flex;flex-direction:column;align-items:center}
.v button{height:21px;width:17px}.v .track{flex:1;width:17px;display:flex;flex-direction:column}
.v .track i:first-child{flex:58}.v .thumb{flex:296;background:#cdcdcd}.v .track i:last-child{flex:336}
sw-icon{--size:19px}
.tree sw-icon{--size:20px}
.v sw-icon,.h sw-icon{--size:14px}
.h{display:flex;height:21px;width:257px;padding-bottom:2px;background:#f0f0f0}.h button{width:20px}.h .thumb{width:167px;background:#cdcdcd}.h i{flex:1}
.splitter{position:absolute;left:276px;top:calc(50% - 40px);width:12px;height:49px;background:var(--panel);border:1px solid var(--line);border-left:0;z-index:3}
`,`<div class="grip"><span class="dot"></span></div>
<div class="tabs"><button aria-label="Feature tree"><sw-icon name="part"></sw-icon></button><button aria-label="Properties"><sw-icon name="list"></sw-icon></button><button aria-label="Configurations"><sw-icon name="config"></sw-icon></button><button aria-label="Dimensions"><sw-icon name="target"></sw-icon></button><button aria-label="Display"><sw-icon name="display"></sw-icon></button><button class="clip" aria-label="CAM"><sw-icon name="cam"></sw-icon></button><button class="nav" aria-label="Previous"><sw-icon name="tl"></sw-icon></button><button class="nav" aria-label="Next"><sw-icon name="tr"></sw-icon></button></div>
<label class="filter"><sw-icon name="filter"></sw-icon><input aria-label="Filter"></label>
<div class="body"><div class="tree">${TREE.map(([i,t,a=''])=>`<sw-tree-item icon="${i}" ${a}>${t}</sw-tree-item>`).join('')}</div>
<div class="v"><button aria-label="Scroll up"><sw-icon name="up"></sw-icon></button><div class="track"><i></i><i class="thumb"></i><i></i></div><button aria-label="Scroll down"><sw-icon name="down"></sw-icon></button></div></div>
<div class="h"><button aria-label="Scroll left"><sw-icon name="cl"></sw-icon></button><span class="thumb"></span><i></i><button aria-label="Scroll right"><sw-icon name="cr"></sw-icon></button></div>
<button class="splitter" aria-label="Collapse panel"><span class="dot"></span></button>`);

const mark=(x,y,k)=>`<g transform="translate(${x} ${y})"><path d="M0 0h12v12H0z" fill="#00cc3c"/>${{par:'<path d="M1 2l9 9M4 1l7 7" stroke="#222" stroke-width="1.100"/>',perp:'<path d="M6 1v9M1 10h10" stroke="#222" stroke-width="1.300"/>',line:'<path d="M1 11L11 1" stroke="#222" stroke-width="1.300"/>',coin:'<path d="M1 11l3-3M8 4l3-3M11 11L8.500 8.500" stroke="#222"/><path d="M4.500 4.500h4v4h-4z" stroke="#222" stroke-width=".8" fill="#9f9"/>'}[k]}</g>`;
define('sw-model',`:host{display:block;width:100%;height:100%}svg{display:block;width:100%;height:100%}text{font-family:"Liberation Sans",sans-serif}`,
`<svg viewBox="277 148 1643 840" preserveAspectRatio="xMidYMid slice" role="img" aria-label="Model view">
<defs>
<linearGradient id="g4"><stop offset="0" stop-color="#6c6a00"/><stop offset=".12" stop-color="#898800"/><stop offset=".3" stop-color="#999700"/><stop offset=".5" stop-color="#9f9d00"/><stop offset=".8" stop-color="#999700"/><stop offset="1" stop-color="#7d7c00"/></linearGradient>
<linearGradient id="g3"><stop offset="0" stop-color="#747200"/><stop offset=".14" stop-color="#929100"/><stop offset=".35" stop-color="#a3a200"/><stop offset=".45" stop-color="#aaa905"/><stop offset=".51" stop-color="#b0af0e"/><stop offset=".6" stop-color="#a5a400"/><stop offset=".85" stop-color="#a09e00"/><stop offset="1" stop-color="#8b8900"/></linearGradient>
<linearGradient id="g2"><stop offset="0" stop-color="#807f00"/><stop offset=".18" stop-color="#9f9d00"/><stop offset=".38" stop-color="#abab00"/><stop offset=".46" stop-color="#cbcb20"/><stop offset=".53" stop-color="#d0d024"/><stop offset=".62" stop-color="#b4b404"/><stop offset=".72" stop-color="#aeae00"/><stop offset=".84" stop-color="#bcbb14"/><stop offset=".93" stop-color="#aaa902"/><stop offset="1" stop-color="#a19f00"/></linearGradient>
<linearGradient id="g1"><stop offset="0" stop-color="#8c8b00"/><stop offset=".25" stop-color="#a3a200"/><stop offset=".5" stop-color="#b3b200"/><stop offset=".75" stop-color="#b6b604"/><stop offset="1" stop-color="#a09e00"/></linearGradient>
<linearGradient id="sk" x2=".4" y2="1"><stop offset="0" stop-color="#b3b2d2"/><stop offset="1" stop-color="#9fa0c4"/></linearGradient>
<linearGradient id="ray" x2="0" y2="1"><stop offset="0" stop-color="#dede26"/><stop offset=".55" stop-color="#d8d826"/><stop offset="1" stop-color="#c0c018"/></linearGradient>
<radialGradient id="glow"><stop offset="0" stop-color="#d3d326"/><stop offset=".45" stop-color="#d0d022" stop-opacity=".75"/><stop offset="1" stop-color="#c0c010" stop-opacity="0"/></radialGradient>
<filter id="soft" x="-50%" y="-50%" width="200%" height="200%"><feGaussianBlur stdDeviation="8"/></filter>
<clipPath id="dome"><path d="M892 466C866 496 845 534 825 576H1173C1152 531 1126 485 1094 450z"/></clipPath>
</defs>
<path d="M892 466C866 496 845 534 825 576H1173C1152 531 1126 485 1094 450z" fill="url(#g1)"/>
<g clip-path="url(#dome)"><g filter="url(#soft)"><path d="M885 462Q843 520 818 584" stroke="#7f7e00" stroke-width="16" fill="none"/><path d="M1072 440C1092 470 1118 520 1134 590" stroke="url(#ray)" stroke-width="15" fill="none"/></g><ellipse cx="1001" cy="595" rx="46" ry="130" fill="url(#glow)"/></g>
<path d="M825 576H1173L1198 639H800z" fill="url(#g2)"/><path d="M800 639H1198L1220 766H778z" fill="url(#g3)"/><path d="M778 766h442v47H778z" fill="url(#g4)"/>
<path d="M892 466C866 496 845 534 825 576L800 639L778 766V813H1220V766L1198 639L1173 576C1152 531 1126 485 1094 450M825 576H1173M800 639H1198M778 766H1220" fill="none" stroke="#111" stroke-width="1.200"/>
<path d="M842 576h3M906 576h2M989 576h2M1090 576h2M1168 576h2M836 639h2M871 639h2M961 639h2M1126 639h2M1180 639h2M821 766h2M985 766h2M1094 766h2M800 813h2M858 813h2M904 813h2M1046 813h2M1094 813h2M1160 813h2" stroke="#d4d43a" stroke-width="1"/>
<path d="M880 308L1082 292L1094 450L892 466z" fill="url(#sk)" stroke="#000" stroke-width="2.200"/>
<g fill="#000"><circle cx="880" cy="308" r="2.500"/><circle cx="1082" cy="292" r="2.500"/><circle cx="1094" cy="450" r="2.500"/><circle cx="892" cy="466" r="2.500"/><path d="M1114 291l3 13h-5zM1126 446l-4-13h5z"/></g>
<path d="M1082 292l35-3M1094 450l36-3M1104 168L1114 290L1126 446" fill="none" stroke="#120800" stroke-width="1.400"/>
<text transform="translate(1110 176) rotate(85)" font-size="23" fill="#000" stroke="#000" stroke-width=".9">50.00</text>
${mark(974,308,'par')}${mark(987,438,'par')}${mark(886,446,'coin')}${mark(886,474,'perp')}${mark(1088,430,'line')}${mark(1102,429,'coin')}${mark(1088,458,'perp')}
<g font-size="12" font-weight="700"><text x="986" y="320">0</text><text x="999" y="450">0</text></g>
<path d="M998 813V784M998 813h12" stroke="red" stroke-width="1.200"/><path d="M998 773l4 11h-7zM1019 813l-11-3v7z" fill="red"/>
<g><path d="M324 914V892h6v22z" fill="#5fae5f" stroke="#0c3d0c"/><path d="M327 882l6 12h-12z" fill="#1c7a1c"/><path d="M322 923h-22v-5h22z" fill="#8080ee" stroke="#111166"/><path d="M290 920l11-6v12z" fill="#1818cc"/><circle cx="327" cy="920" r="6" fill="#701414"/><path d="M323 915l8 9M331 915l-8 9" stroke="#f00" stroke-width="1.500"/></g>
<g font-size="14"><text x="322" y="879" fill="#0a7a0a">Y</text><text x="280" y="924" fill="#1414e0">Z</text></g>
</svg>`);

define('sw-viewport',`:host{display:block;flex:1;min-width:0;position:relative;overflow:hidden}
.hud{position:absolute;top:2px;left:0;right:4px;display:flex;justify-content:center;--caret:#888}
.confirm{position:absolute;top:32px;right:40px;width:76px;height:60px;opacity:.8}
.confirm svg{display:block}`,
`<sw-model></sw-model>
<div class="hud"><sw-tool icon="zoomfit" label="Zoom to fit"></sw-tool><sw-tool icon="zoomarea" label="Zoom to area"></sw-tool><sw-tool icon="prev" label="Previous view"></sw-tool><sw-tool icon="section" label="Section view"></sw-tool><sw-tool icon="dyn" label="Dynamic annotation"></sw-tool><sw-tool icon="orient" label="View orientation" menu></sw-tool><sw-tool icon="style" label="Display style" menu></sw-tool><sw-tool icon="eye" label="Hide/show" menu></sw-tool><sw-tool icon="appear" label="Edit appearance"></sw-tool><sw-tool icon="scene" label="Apply scene" menu></sw-tool><sw-tool icon="monitor" label="View settings" menu></sw-tool></div>
<button class="confirm" aria-label="Confirm or cancel sketch"><svg width="76" height="60" viewBox="0 0 76 60"><path d="M26 3H6v15q0 9 9 9h10" fill="none" stroke="#b4cede" stroke-width="2"/><path d="M27 27l9-9v5c6 0 8-2 12-7 1 10-5 15-12 15v6z" fill="#bed5e2" stroke="#9db6c4"/><path d="M56 38l14 14M70 38L56 52" stroke="#d3a3a3" stroke-width="10" stroke-linecap="round"/><path d="M56 38l14 14M70 38L56 52" stroke="#eab8bb" stroke-width="8" stroke-linecap="round"/></svg></button>`);

define('sw-taskpane',`:host{position:absolute;right:0;top:30px;width:33px;border:1px solid var(--line);border-right:0;display:flex;flex-direction:column;background:var(--tab)}
button{height:30px;border-bottom:1px solid var(--line)}button:last-child{height:29px;border:0;background:var(--panel)}sw-icon{--size:19px}`,
`<button aria-label="Resources"><sw-icon name="home"></sw-icon></button><button aria-label="Design library"><sw-icon name="library"></sw-icon></button><button aria-label="File explorer"><sw-icon name="folder"></sw-icon></button><button aria-label="View palette"><sw-icon name="palette"></sw-icon></button><button aria-label="Appearances"><sw-icon name="ball"></sw-icon></button><button aria-label="Custom properties"><sw-icon name="list"></sw-icon></button><button aria-label="Updates"><sw-icon name="globe"></sw-icon></button><button aria-label="Forum"><sw-icon name="forum"></sw-icon></button><button aria-label="Inspection"><sw-icon name="inspect"></sw-icon></button>`);

define('sw-sheets',`:host{display:flex;height:21px;border-top:1px solid var(--line);border-bottom:1px solid var(--line);background:var(--panel);font-size:15px}
.nav{display:flex;padding-left:2px;width:83px;background:#b5b6cc;border-right:1px solid #888}.nav button{width:20px;border:1px solid #9495b3;border-right-color:#d0d0e0;background:#a8a9c2}.nav sw-icon{--size:14px}
.t{padding:0 13px;border-right:1px solid var(--line);background:var(--tab);line-height:19px}.on{padding:0 14px 0 15px;background:var(--panel);font-weight:700}.wide{padding-right:24px}`,
`<div class="nav"><button aria-label="First"><sw-icon name="first"></sw-icon></button><button aria-label="Previous"><sw-icon name="left"></sw-icon></button><button aria-label="Next"><sw-icon name="right"></sw-icon></button><button aria-label="Last"><sw-icon name="last"></sw-icon></button></div>
<button class="t on">Model</button><button class="t">3D Views</button><button class="t wide">Motion Study 1</button>`);

define('sw-status',`:host{display:flex;align-items:center;justify-content:space-between;height:22px;padding:2px 0 0 1px;line-height:19px;border-bottom:1px solid #c8ccd4;background:var(--panel)}
.r{display:flex;align-items:center}.c{text-align:right;white-space:nowrap}
.a{width:97px}.b{width:61px}.d{width:108px}.e{width:40px;align-self:stretch;border-right:1px solid #c8c8c8}
.u{width:125px}sw-icon{--size:17px}.w{margin-left:4px}.m{width:56px}.z{display:flex;padding-right:4px}`,
`<span>SOLIDWORKS Premium 2020 SP0.0</span><div class="r"><span class="c">-214.64mm</span><span class="c a">185.55mm</span><span class="c b">0.00mm</span><span class="c d">Fully Defined</span><span class="e"></span><sw-icon class="w" name="warn"></sw-icon><span class="c u">MMGS</span><button class="m" aria-label="Unit system"><sw-caret up></sw-caret></button><span class="z"><sw-icon name="tag"></sw-icon></span></div>`);

define('sw-app',`:host{display:flex;flex-direction:column;height:100vh;position:relative}
.busy{position:absolute;z-index:5;top:0;left:809px;width:301px;height:1px;background:linear-gradient(90deg,#0a6fd0 60px,#e0e0e0 60px)}
.work{flex:1;min-height:0;display:flex;flex-direction:column;border-right:1px solid #111;
background:linear-gradient(180deg,rgba(255,255,255,0) 53%,rgba(251,251,253,.7) 61%,#fff 71%,#fefefe 82%,#f5f6fa 100%),
radial-gradient(ellipse 24% 55% at 103% 0%,rgba(249,249,252,.85),rgba(249,249,252,0)),
radial-gradient(ellipse 72% 58% at 24% 0%,#fff 50%,rgba(255,255,255,0) 100%),
radial-gradient(ellipse 45% 65% at 82% 45%,#d8dbe8 0,#dfe2ec 50%,#e1e5ef 100%)}
.row{flex:1;min-height:0;display:flex;position:relative}`,
`<div class="busy"></div><sw-titlebar></sw-titlebar><sw-ribbon></sw-ribbon>
<div class="work"><sw-tabs></sw-tabs><div class="row"><sw-manager></sw-manager><sw-viewport></sw-viewport><sw-taskpane></sw-taskpane></div></div>
<sw-sheets></sw-sheets><sw-status></sw-status>`);
</script>
</body>
</html>
